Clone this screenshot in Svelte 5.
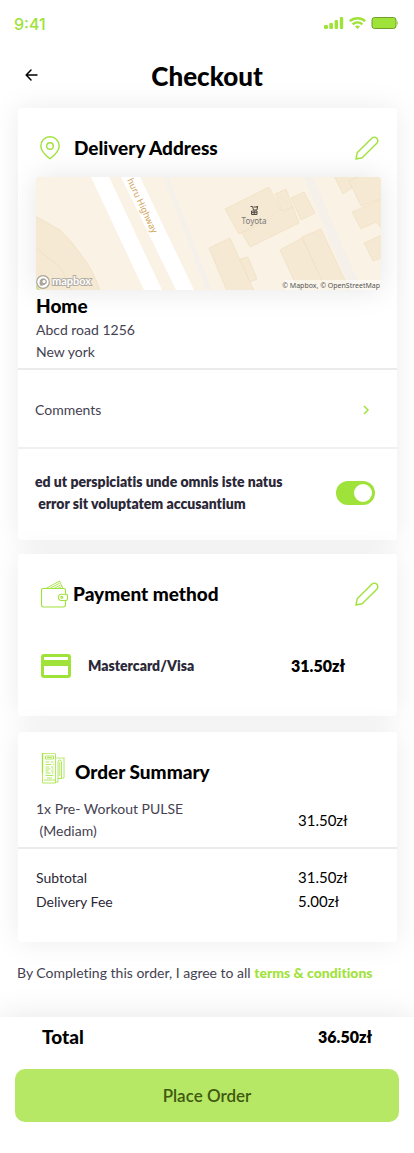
<script>
  let leaveAtDoor = $state(true);
</script>

{#snippet pencil()}
  <svg width="24" height="24" viewBox="0 0 24 24" fill="none" stroke="currentColor" stroke-width="1.4" stroke-linejoin="round">
    <path d="M1 23l1.2-6.200L16.8 2.200a3.500 3.500 0 0 1 5 5L7.200 21.800z" />
  </svg>
{/snippet}

<div class="page">
  <div class="status">
    <span class="time">9:41</span>
    <svg width="74" height="16" viewBox="0 0 74 16" fill="#9fe23a" aria-hidden="true">
      <rect x="0" y="9" width="4" height="4" rx="1.200" />
      <rect x="5.300" y="7" width="3.700" height="6" rx="1" />
      <rect x="10.600" y="4" width="3.400" height="9" rx="1" />
      <rect x="15.800" y="1" width="3.400" height="12" rx="1" />
      <g fill="none" stroke="#9fe23a" stroke-width="2.3">
        <path d="M25.800 5.200a11.500 11.500 0 0 1 15.400 0" />
        <path d="M28.600 8.300a7.300 7.300 0 0 1 9.800 0" />
      </g>
      <path d="M31 10.600a4 4 0 0 1 5 0L33.500 13z" />
      <rect x="48" y="1.500" width="24" height="11" rx="2.500" stroke="#6f9e2b" />
      <path d="M73 5v4c1.400-.6 1.400-3.400 0-4z" />
    </svg>
  </div>

  <header>
    <button class="icon back" aria-label="Back">
      <svg width="14" height="14" viewBox="0 0 14 14" fill="none" stroke="currentColor" stroke-width="1.500" stroke-linecap="round" stroke-linejoin="round">
        <path d="M13 7H2.500M7 2L2.200 7 7 12" />
      </svg>
    </button>
    <h1>Checkout</h1>
  </header>

  <main>
    <section class="card delivery">
      <div class="head">
        <svg class="pin" width="20" height="24" viewBox="0 0 20 24" fill="none" stroke="currentColor" stroke-width="1.400">
          <path d="M10 22.800C6.500 20 .8 15.200.8 9.900a9.200 9.200 0 0 1 18.400 0C19.200 15.200 13.500 20 10 22.800z" />
          <circle cx="10" cy="10" r="3.300" />
        </svg>
        <h2>Delivery Address</h2>
        <button class="icon edit" aria-label="Edit address">{@render pencil()}</button>
      </div>

      <svg class="map" viewBox="0 0 345 113" role="img" aria-label="Map">
        <rect width="345" height="113" fill="#faf2e5" />
        <g fill="#f5f1ea">
          <path d="M127 0h6l43 113h-6z" />
          <path d="M268 0h9l49 113h-12z" />
        </g>
        <g fill="#fff">
          <path d="M55 0h18l53 113h-18z" />
          <path d="M85 0h19l54 113h-18z" />
        </g>
        <g fill="#f5e9d3" stroke="#efdfc0" stroke-width=".7">
          <path d="M-1 39l25 14q9 8 19 22 14 17 21 39H-1z" />
          <path d="M-1 70l25 20q7 12 12 24" fill="none" />
          <path d="M189 32l44-22 12 24-42 23z" />
          <path d="M239 17l11-5 7 18-11 4z" />
          <path d="M255 21l13-6 11 21-14 7z" />
          <path d="M206 56l51-26 6 16-49 24z" />
          <path d="M173 71l21-10 24 53h-27z" />
          <path d="M204 82l8-2 9 22-7 3z" />
          <path d="M244 73l22-12 25 53h-28z" />
          <path d="M266 60l19-8 29 62h-23z" />
          <path d="M298-1h23l-5 12-9 6z" />
          <path d="M313 4l11-5h22v22l-21 8z" />
          <path d="M316 35l30-13v30l-6-7-15 7z" />
          <path d="M328 66l18-8v23l-9 3z" />
        </g>
        <text class="road" transform="translate(91 3) rotate(65)">huru Highway</text>
        <g fill="none" stroke="#504a42">
          <path d="M214.500 29.500h2l1 3.500h3.500l.5-3h-4M220.500 29.500h1.500M215.500 34h5.500v3.500h-5.500zM218.200 34v3.500M215.500 35.700h5.500" />
        </g>
        <text class="place" x="218" y="47" text-anchor="middle">Toyota</text>
        <path d="M0 108l4 5H0z" fill="#c5e58a" />
        <g fill="none" stroke="#aaa49a" stroke-width="1.200">
          <circle cx="7" cy="105" r="6.300" fill="#fff" />
          <path d="M4.500 108c-1.500-5 2-7 4.500-5.500 3 2 .5 6-4.500 5.500z" fill="#aaa49a" />
          <circle cx="8" cy="104.500" r="1" fill="#fff" stroke="#fff" />
        </g>
        <text class="logo" x="16" y="108">mapbox</text>
        <rect x="249" y="103" width="96" height="10" fill="#fff" opacity=".5" />
        <text class="credit" x="344" y="111" text-anchor="end">© Mapbox, © OpenStreetMap</text>
      </svg>

      <div class="address">
        <h2>Home</h2>
        <p>Abcd road 1256<br />New york</p>
      </div>
      <button class="comments">
        <span>Comments</span>
        <svg width="6" height="10" viewBox="0 0 6 10" fill="none" stroke="#9fe23a" stroke-width="1.500">
          <path d="M1 1l4 4-4 4" />
        </svg>
      </button>
      <div class="option">
        <label for="leave">ed ut perspiciatis unde omnis iste natus<br />&nbsp;error sit voluptatem accusantium</label>
        <input id="leave" type="checkbox" role="switch" bind:checked={leaveAtDoor} />
      </div>
    </section>

    <section class="card payment">
      <div class="head">
        <svg class="wallet" width="28" height="28" viewBox="0 0 28 28" fill="none" stroke="currentColor" stroke-width="1.100" stroke-linejoin="round">
          <path d="M25.500 14V10q0-1.500-1.500-1.500H3Q1.500 8.500 1.500 10v14.500Q1.500 27 3.500 27H23q2.500 0 2.500-2.500V20.500" />
          <path d="M21.500 14.200h4.500q1.500 0 1.500 1.500v3.300q0 1.500-1.500 1.500h-4.500a3.100 3.100 0 0 1 0-6.300z" />
          <circle cx="21.800" cy="17.300" r="1" />
          <path d="M6 8.500L19.500 1l3.500 7.500M10 8.500l9.500-5.300M14 8.500l6.500-3.400M18 8.500l3.500-1.800" stroke-width=".9" />
        </svg>
        <h2>Payment method</h2>
        <button class="icon edit" aria-label="Edit payment method">{@render pencil()}</button>
      </div>
      <div class="method">
        <svg width="30" height="24" viewBox="0 0 30 24">
          <path fill="#9fe23a" fill-rule="evenodd" d="M3 0h24q3 0 3 3v18q0 3-3 3H3q-3 0-3-3V3Q0 0 3 0zm0 3v3h24V3zm0 9v9h24v-9z" />
        </svg>
        <span>Mastercard/Visa</span>
        <strong>31.50zł</strong>
      </div>
    </section>

    <section class="card summary">
      <div class="head">
        <svg class="receipt" width="24" height="32" viewBox="0 0 24 32" fill="none" stroke="currentColor" stroke-width=".8">
          <path d="M1.500 31V1l1 1 1-1 1 1 1-1 1 1 1-1 1 1 1-1 1 1 1-1 1 1 1-1 1 1v29z" />
          <path d="M1.500 1v20" stroke-width="1.300" />
          <path d="M4.500 4h8v3h-8zM6 5.500h5M4.500 10h4M10 10h2.500M4.500 12.500h6M12 12.500h1M4.500 15H8M10 15h2.500M4.500 17h5M11 17h1.500M4.500 19h3M10 19h2.500M4.500 21h5M11 21h1.500M4.500 23.500h8M3 28h11M6 26h5" />
          <path d="M15 5.500l1 1 1-1 1 1 1-1 1 1 1-1 1 1 1-1V26h-3M15 30h2V10q0-2 1.800-2 1.700 0 1.700 2v16.500H17M18.800 10v14" />
        </svg>
        <h2>Order Summary</h2>
      </div>
      <div class="item">
        <p>1x Pre- Workout PULSE<br />&nbsp;(Mediam)</p>
        <span class="price">31.50zł</span>
      </div>
      <dl>
        <div><dt>Subtotal</dt><dd>31.50zł</dd></div>
        <div><dt>Delivery Fee</dt><dd>5.00zł</dd></div>
      </dl>
    </section>
    <p class="terms">By Completing this order, I agree to all <a href="#terms">terms &amp; conditions</a></p>
  </main>

  <footer>
    <div class="total"><h2>Total</h2><strong>36.50zł</strong></div>
    <button class="place-order">Place Order</button>
  </footer>
</div>

<style>
  :global(body) { margin: 0; background: #fff; }
  .page {
    font-family: Lato, "Liberation Sans", sans-serif;
    font-size: 14px;
    line-height: 22px;
    font-variant-ligatures: none;
    color: #2b2838;
    overflow: hidden;
  }
  h1, h2, p, dl, dd { margin: 0; }
  button { font: inherit; color: inherit; border: 0; padding: 0; background: none; cursor: pointer; }
  svg { display: block; flex: none; }
  .icon { display: block; }
  .status {
    display: flex;
    justify-content: space-between;
    align-items: center;
    height: 24px;
    padding: 12px 16px 12px 14px;
    color: #9fe23a;
  }
  .time { font: 500 16px/24px Inter, sans-serif; }
  header {
    display: grid;
    grid-template-columns: 24px 1fr 24px;
    align-items: center;
    height: 56px;
    padding: 0 24px 4px;
    color: #000;
  }
  .back { padding-bottom: 2px; }
  h1 { font-size: 26px; line-height: 32px; font-weight: 900; text-align: center; }
  h2 { font-size: 19px; line-height: 24px; font-weight: 900; color: #000; }
  main { padding: 0 17px 0 18px; }
  .card {
    background: #fff;
    border-radius: 3px;
    box-shadow: 0 0 30px rgba(0, 0, 0, 0.08);
    box-sizing: border-box;
  }
  .head {
    display: flex;
    align-items: center;
    padding: 0 18px 0 22px;
    color: #9fe23a;
  }
  .edit { margin-left: auto; }
  .delivery { padding-top: 28px; margin-bottom: 14px; }
  .pin { margin-right: 14px; }
  .map {
    width: calc(100% - 34px);
    margin: 17px 16px 0 18px;
    border-radius: 3px;
    box-shadow: 0 0 30px rgba(0, 0, 0, 0.1);
  }
  .map text { font-family: "Noto Sans", sans-serif; }
  .map .road { font-size: 9px; fill: #d2a256; }
  .map .place { font-size: 8px; fill: #777; }
  .map .logo { font: 700 11px Lato, sans-serif; fill: #fff; stroke: #b3ada3; stroke-width: 2px; paint-order: stroke; }
  .map .credit { font-size: 7px; fill: #555; }
  .address { padding: 4px 18px 5px; border-bottom: 2px solid #ebebeb; }
  .address p { padding-top: 1px; }
  .comments {
    display: flex;
    width: 100%;
    justify-content: space-between;
    align-items: center;
    height: 79px;
    padding: 2px 28px 0 17px;
    border-bottom: 2px solid #f0f0f0;
  }
  .option {
    display: flex;
    justify-content: space-between;
    align-items: center;
    padding: 22px 22px 25px 17px;
    font-weight: 800;
  }
  input {
    appearance: none;
    flex: none;
    width: 39px;
    height: 24px;
    margin: 0;
    padding: 3px;
    border-radius: 12px;
    background: #ccc;
    box-sizing: border-box;
    display: flex;
  }
  input::before { content: ""; width: 18px; height: 18px; border-radius: 50%; background: #fff; }
  input:checked { background: #9fe23a; justify-content: flex-end; }
  .payment { padding: 26px 0 38px; margin-bottom: 16px; }
  .wallet { margin-right: 5px; }
  .method {
    display: flex;
    align-items: center;
    padding: 46px 52px 0 23px;
    font-weight: 800;
  }
  .method span { margin-left: 17px; }
  strong { margin-left: auto; font-size: 16px; line-height: 24px; font-weight: 800; color: #000; }
  .summary { padding: 19px 0 29px; margin-bottom: 20px; }
  .receipt { margin-right: 10px; }
  .summary .head { padding-left: 23px; }
  .summary h2 { padding-top: 9px; }
  .address p, .comments, .item p, .terms { color: #454252; }
  .item {
    display: flex;
    justify-content: space-between;
    align-items: center;
    padding: 14px 52px 5px 18px;
    border-bottom: 2px solid #ebebeb;
  }
  .price, dd { width: 47px; font-size: 15px; line-height: 24px; color: #000; white-space: nowrap; }
  dl { padding: 16px 52px 0 18px; }
  dl div { display: flex; justify-content: space-between; align-items: flex-start; }
  dt { padding-top: 2px; }
  .terms { margin-left: -1px; }
  a { color: #9fe23a; font-weight: 900; text-decoration: none; }
  footer {
    margin-top: 33px;
    padding: 8px 15px 31px;
    background: #fff;
    box-shadow: 0 0 30px rgba(0, 0, 0, 0.1);
  }
  .total { display: flex; align-items: center; padding: 0 27px; }
  .place-order {
    display: block;
    width: 100%;
    height: 53px;
    margin-top: 20px;
    border-radius: 10px;
    background: #b6e865;
    color: #40590f;
    font-size: 17px;
    font-weight: 600;
  }
</style>
